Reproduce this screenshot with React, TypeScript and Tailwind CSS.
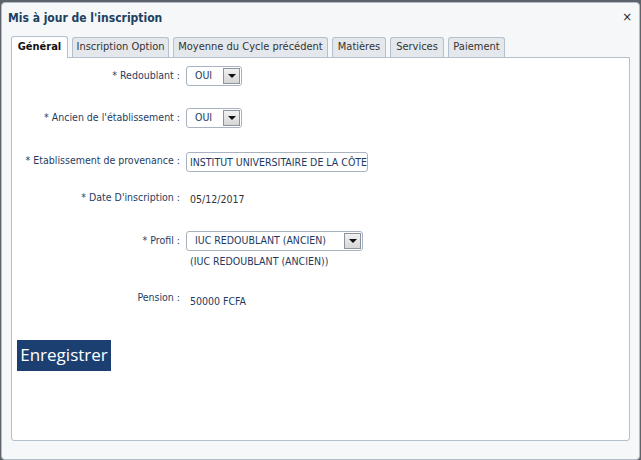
import React from 'react'

const font = { fontFamily: '"DejaVu Sans Condensed", "DejaVu Sans", Tahoma, sans-serif' }

function Arrow() {
  return (
    <span className="flex h-[16px] w-[17px] items-center justify-center border border-[#8d939a] bg-gradient-to-b from-[#f2f2f2] to-[#d6d6d6]">
      <span className="h-0 w-0 border-x-[4px] border-t-[4px] border-x-transparent border-t-[#111]" />
    </span>
  )
}

function Select({ value, width }: { value: string; width: string }) {
  return (
    <div className={`flex h-[20px] items-center justify-between rounded-[3px] border border-[#a9b3bf] bg-white pl-[8px] pr-[1px] ${width}`}>
      <span className="text-[10.5px] text-[#1d3a62]">{value}</span>
      <Arrow />
    </div>
  )
}

function Row({ label, children, className }: { label: string; children: React.ReactNode; className?: string }) {
  return (
    <div className={`flex items-center ${className || ''}`}>
      <div className="w-[169px] text-right text-[10.5px] text-[#1f3d63] pr-[1px]">{label}</div>
      <div className="ml-[5px]">{children}</div>
    </div>
  )
}

export default function App() {

  const tabs = [
    { nom: 'Inscription Option', w: 'w-[97px]' },
    { nom: 'Moyenne du Cycle précédent', w: 'w-[155px]' },
    { nom: 'Matières', w: 'w-[54px]' },
    { nom: 'Services', w: 'w-[54px]' },
    { nom: 'Paiement', w: 'w-[57px]' },
  ]

  return (
    <div className="h-[460px] w-[641px] bg-[#5d636b] pt-[2px] pl-[1px]" style={font}>

      <div className="relative flex h-[458px] w-[639px] flex-col rounded-[4px] border border-[#b4bcc6] bg-[#f6f7f8]">

        <div className="flex h-[33px] items-center pl-[6px] pb-[3px]">
          <span className="text-[12px] font-bold text-[#1b4060]">Mis à jour de l'inscription</span>
        </div>

        <span className="absolute right-[7px] top-[4px] text-[13px] text-[#222]">×</span>

        <div className="flex h-[21px] items-end pl-[9px]">
          <div className="relative z-10 -mb-[1px] flex h-[22px] w-[57px] items-center justify-center rounded-t-[3px] border border-b-0 border-[#b4c0cc] bg-white text-[11px] font-bold text-[#111]">
            Général
          </div>
          {tabs.map((t) => (
            <div
              key={t.nom}
              className={`ml-[4px] flex h-[20px] items-center justify-center rounded-t-[3px] border border-b-0 border-[#b4c0cc] bg-[#e4e8ec] text-[11px] text-[#333] ${t.w}`}
            >
              {t.nom}
            </div>
          ))}
        </div>

        <div className="mx-[9px] h-[384px] rounded-b-[3px] border border-[#b4c0cc] bg-white">

          <Row label="* Redoublant :" className="mt-[8px]">
            <Select value="OUI" width="w-[56px]" />
          </Row>

          <Row label="* Ancien de l'établissement :" className="mt-[22px]">
            <Select value="OUI" width="w-[56px]" />
          </Row>

          <Row label="* Etablissement de provenance :" className="mt-[21px]">
            <input
              readOnly
              value="INSTITUT UNIVERSITAIRE DE LA CÔTE"
              className="h-[20px] w-[182px] rounded-[3px] border border-[#a9b3bf] bg-white pl-[3px] text-[10.5px] text-[#1d3a62] outline-none"
            />
          </Row>

          <Row label="* Date D'inscription :" className="mt-[13px]">
            <span className="ml-[4px] text-[10.5px] text-[#333]">05/12/2017</span>
          </Row>

          <Row label="* Profil :" className="mt-[21px]">
            <Select value="IUC REDOUBLANT (ANCIEN)" width="w-[177px]" />
          </Row>

          <div className="ml-[178px] mt-[3px] text-[10.5px] text-[#1d3a62]">(IUC REDOUBLANT (ANCIEN))</div>

          <div className="mt-[20px] flex items-start">
            <div className="w-[169px] text-right text-[10.5px] text-[#1f3d63] pr-[1px]">Pension :</div>
            <div className="ml-[9px] mt-[4px] text-[10.5px] text-[#1d3a62]">50000 FCFA</div>
          </div>

          <button className="ml-[5px] mt-[30px] flex h-[31px] w-[94px] items-center justify-center bg-[#1c3f72] text-[17px] font-medium text-white" style={{ fontFamily: '"Open Sans", sans-serif' }}>
            Enregistrer
          </button>

        </div>

      </div>

    </div>
  )

}
